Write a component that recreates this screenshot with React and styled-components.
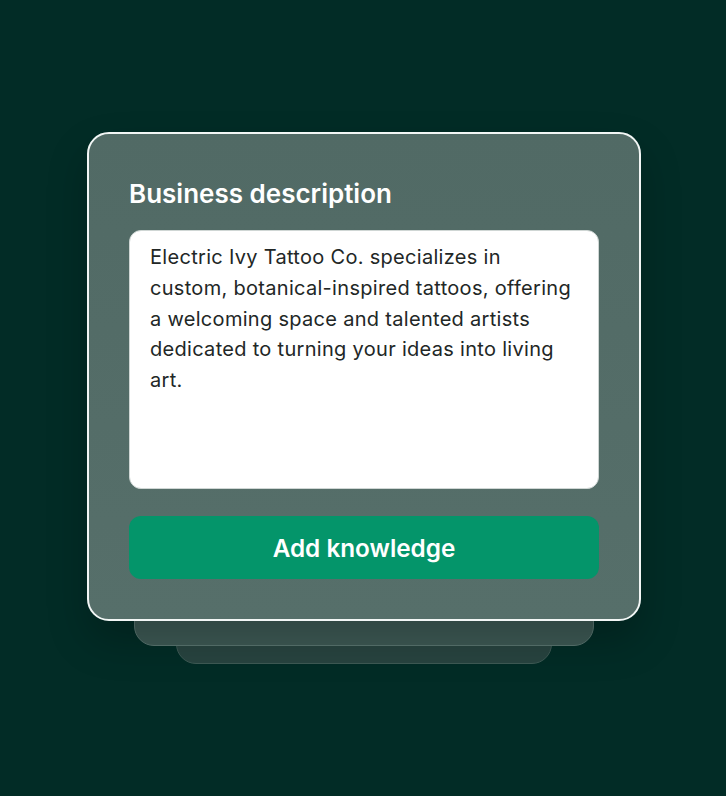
import React from "react";
import styled, { createGlobalStyle } from "styled-components";

const Global = createGlobalStyle`
  html, body { margin: 0; padding: 0; background: #022c26; }
  body { font-family: Inter, "Noto Sans", sans-serif; }
`;

const Page = styled.div`
  width: 726px;
  height: 796px;
  background: #022c26;
  display: flex;
  justify-content: flex-start;
  padding: 132px 0 0 87px;
  box-sizing: border-box;
`;

const Stack = styled.div`
  position: relative;
  width: 554px;
  height: 532px;
`;

const Layer = styled.div`
  position: absolute;
  left: ${(p) => p.$inset}px;
  right: ${(p) => p.$inset}px;
  top: 0;
  height: ${(p) => p.$h}px;
  border-radius: 20px;
  background: ${(p) => p.$bg};
  border: 1.5px solid ${(p) => p.$line};
  box-sizing: border-box;
`;

const Card = styled.div`
  position: relative;
  width: 554px;
  height: 489px;
  box-sizing: border-box;
  border: 2px solid #f2f6f5;
  border-radius: 22px;
  background: linear-gradient(180deg, #516a65 0%, #566f6a 100%);
  box-shadow: 0 20px 40px rgba(0, 0, 0, 0.22);
  padding: 44px 40px 40px;
  display: flex;
  flex-direction: column;
`;

const Title = styled.h2`
  margin: 0;
  font-size: 26px;
  line-height: 32px;
  font-weight: 600;
  color: #ffffff;
`;

const Box = styled.div`
  margin-top: 20px;
  height: 260px;
  box-sizing: border-box;
  background: #ffffff;
  border: 1.5px solid #cfd6d4;
  border-radius: 12px;
  padding: 11px 20px;
  font-size: 20px;
  line-height: 30.8px;
  letter-spacing: 0.3px;
  color: #222726;
  white-space: nowrap;
`;

const Line = styled.span`
  display: block;
`;

const Button = styled.button`
  margin-top: 27px;
  height: 63px;
  border: none;
  border-radius: 12px;
  background: #04956a;
  color: #ffffff;
  font-family: Inter, "Noto Sans", sans-serif;
  font-size: 24.3px;
  font-weight: 600;
  cursor: pointer;
`;

const lines = [
  "Electric Ivy Tattoo Co. specializes in",
  "custom, botanical-inspired tattoos, offering",
  "a welcoming space and talented artists",
  "dedicated to turning your ideas into living",
  "art.",
];

export default function App() {
  return (
    <>
      <Global />
      <Page>
        <Stack>
          <Layer $inset={89} $h={532} $bg="#284440" $line="#3e5a55" />
          <Layer $inset={47} $h={514} $bg="#3d5954" $line="#5a7570" />
          <Card>
            <Title>Business description</Title>
            <Box>
              {lines.map((l) => (
                <Line key={l}>{l}</Line>
              ))}
            </Box>
            <Button>Add knowledge</Button>
          </Card>
        </Stack>
      </Page>
    </>
  );
}
